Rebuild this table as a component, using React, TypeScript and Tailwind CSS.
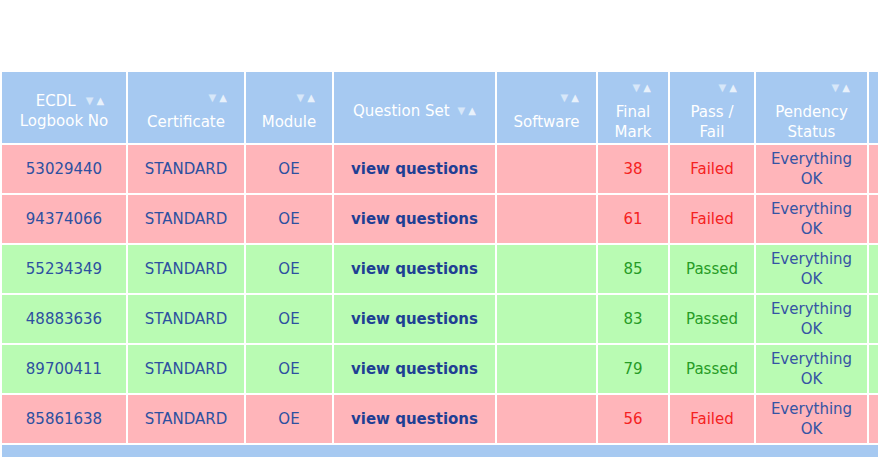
type Row = {
  logbook: string;
  mark: number;
  passed: boolean;
};

const ROWS: Row[] = [
  { logbook: "53029440", mark: 38, passed: false },
  { logbook: "94374066", mark: 61, passed: false },
  { logbook: "55234349", mark: 85, passed: true },
  { logbook: "48883636", mark: 83, passed: true },
  { logbook: "89700411", mark: 79, passed: true },
  { logbook: "85861638", mark: 56, passed: false },
];

function SortIcons() {
  return (
    <span className="inline-flex items-center gap-[3px] text-[10px] leading-none text-white/55">
      <span>▼</span>
      <span className="text-white/75">▲</span>
    </span>
  );
}

// header with sort arrows sitting above the label, pushed to the right
function StackedHeader({ lines }: { lines: string[] }) {
  return (
    <div className="flex flex-col">
      <div className="flex h-[16px] items-center justify-end pr-[17px] mb-[6px]">
        <SortIcons />
      </div>
      {lines.map((l) => (
        <div key={l} className="text-center leading-[20px]">
          {l}
        </div>
      ))}
    </div>
  );
}

export default function App() {
  const th = "bg-[#a6c9f1] text-white font-normal align-middle pt-[7px] pb-0 px-0";
  const td = "h-[48px] p-0 text-center align-middle leading-[20px]";

  return (
    <div
      className="w-[878px] h-[457px] overflow-hidden bg-white pt-[70px]"
      style={{ fontFamily: '"DejaVu Sans", Verdana, sans-serif' }}
    >
      <table className="table-fixed w-[931px] border-separate border-spacing-[2px] text-[15px]">
        <thead>
          <tr>
            <th className={`${th} w-[124px] h-[71px]`}>
              <div className="flex flex-col">
                <div className="flex items-center justify-center gap-[10px] pl-[12px] leading-[20px]">
                  <span>ECDL</span>
                  <SortIcons />
                </div>
                <div className="text-center leading-[20px]">Logbook No</div>
              </div>
            </th>
            <th className={`${th} w-[116px]`}>
              <StackedHeader lines={["Certificate"]} />
            </th>
            <th className={`${th} w-[86px]`}>
              <StackedHeader lines={["Module"]} />
            </th>
            <th className={`${th} w-[161px]`}>
              <div className="flex items-center justify-center gap-[8px] leading-[20px]">
                <span>Question Set</span>
                <SortIcons />
              </div>
            </th>
            <th className={`${th} w-[99px]`}>
              <StackedHeader lines={["Software"]} />
            </th>
            <th className={`${th} w-[70px]`}>
              <StackedHeader lines={["Final", "Mark"]} />
            </th>
            <th className={`${th} w-[84px]`}>
              <StackedHeader lines={["Pass /", "Fail"]} />
            </th>
            <th className={`${th} w-[111px]`}>
              <StackedHeader lines={["Pendency", "Status"]} />
            </th>
            <th className={`${th} w-[60px]`}></th>
          </tr>
        </thead>
        <tbody>
          {ROWS.map((r) => {
            const bg = r.passed ? "bg-[#b9fbb3]" : "bg-[#ffb5ba]";
            return (
              <tr key={r.logbook} className={bg}>
                <td className={`${td} text-[#2d50a0]`}>{r.logbook}</td>
                <td className={`${td} text-[#2d50a0]`}>STANDARD</td>
                <td className={`${td} text-[#2d50a0]`}>OE</td>
                <td className={td}>
                  <a className="font-bold text-[#1f3f94]">view questions</a>
                </td>
                <td className={td}></td>
                <td className={`${td} ${r.passed ? "text-[#279c27]" : "text-[#f52222]"}`}>{r.mark}</td>
                <td className={`${td} ${r.passed ? "text-[#279c27]" : "text-[#f52222]"}`}>
                  {r.passed ? "Passed" : "Failed"}
                </td>
                <td className={`${td} text-[#3554a4]`}>
                  Everything
                  <br />
                  OK
                </td>
                <td className={td}></td>
              </tr>
            );
          })}
          <tr>
            <td colSpan={9} className="h-[24px] bg-[#a6c9f1]"></td>
          </tr>
        </tbody>
      </table>
    </div>
  );
}
